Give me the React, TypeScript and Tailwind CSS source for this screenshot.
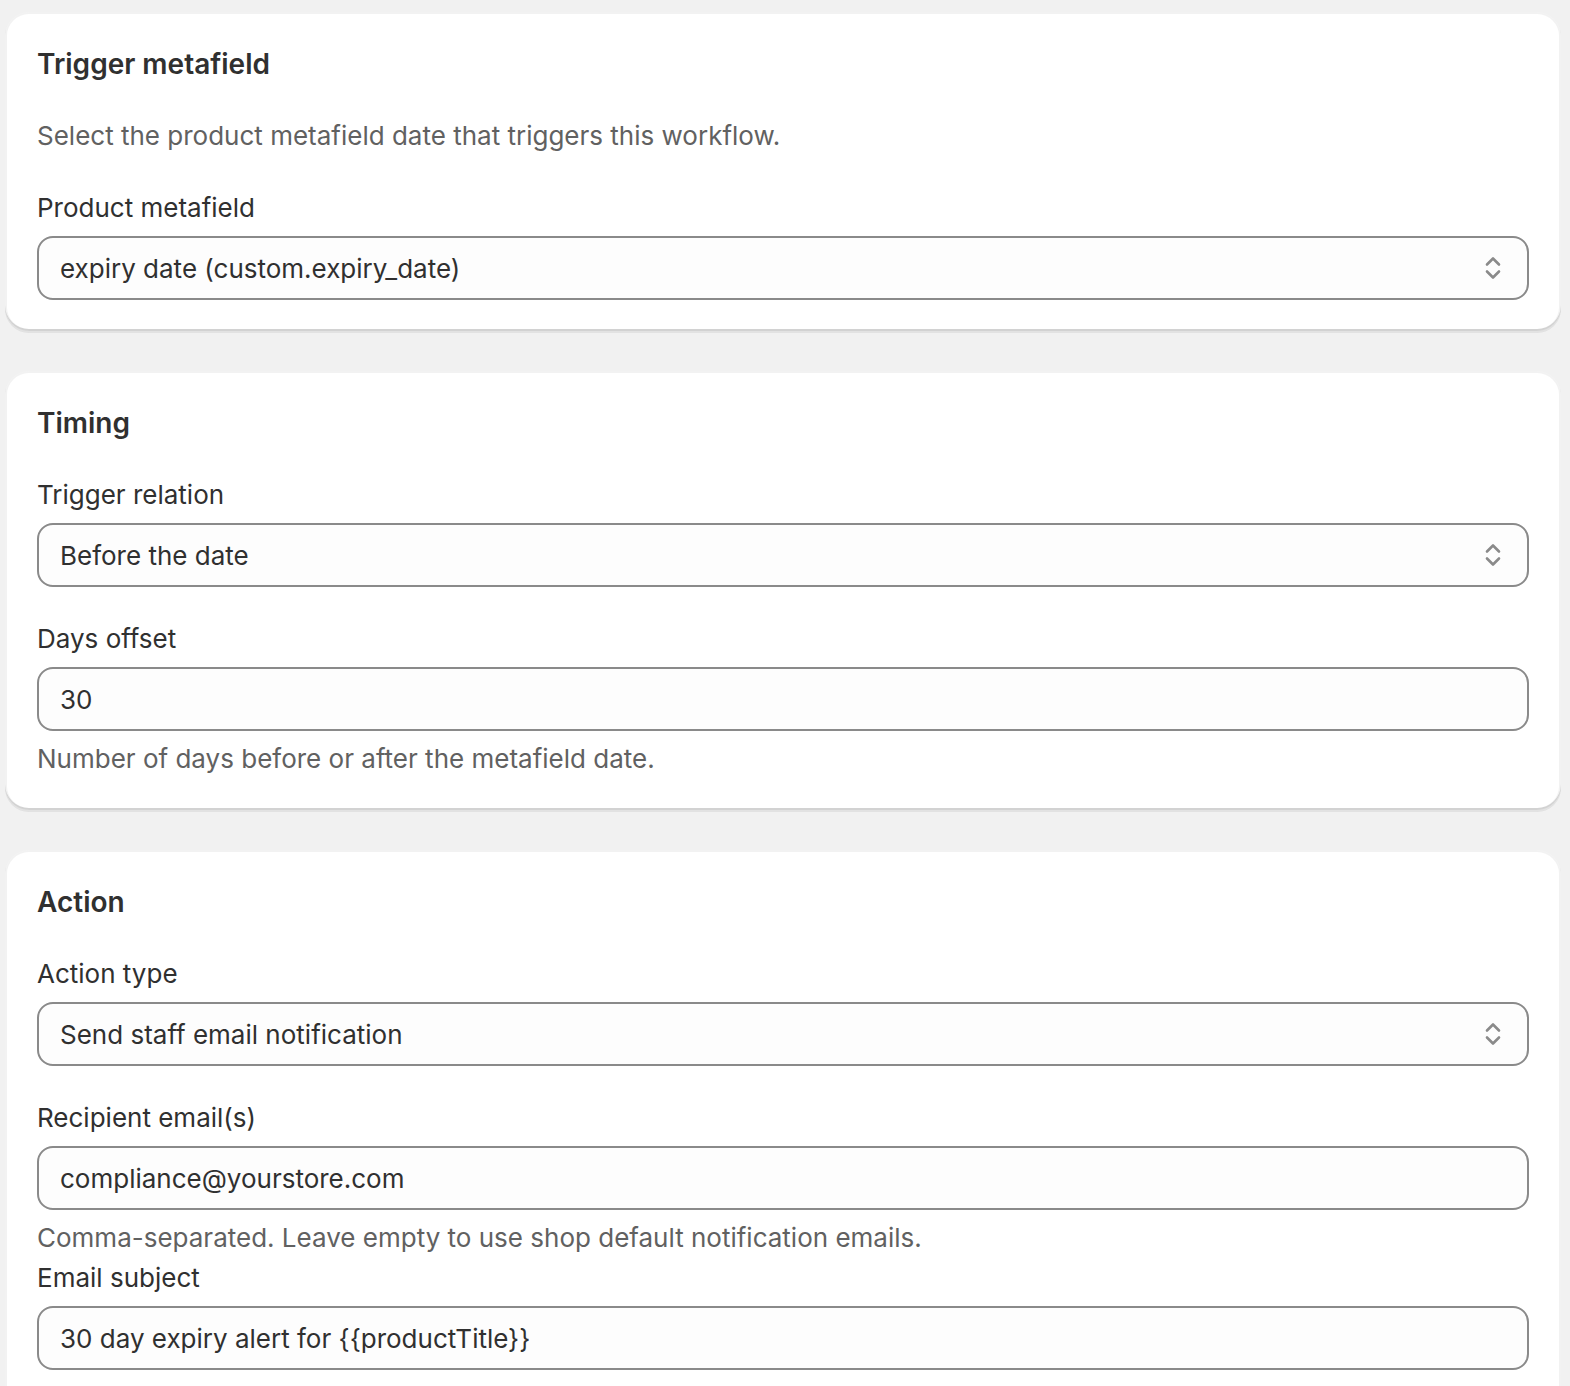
import type { ReactNode } from "react";

const FONT = { fontFamily: "Inter, 'Noto Sans', sans-serif" };

function Card({ title, children }: { title: string; children: ReactNode }) {
  return (
    <section className="rounded-[24px] bg-white px-8 pt-8 pb-[31px] shadow-[0_2px_0_rgba(26,26,26,0.07),inset_0_-2px_0_rgba(0,0,0,0.13),inset_0_0_0_2px_rgba(0,0,0,0.05)]">
      <h2 className="text-[28px] leading-10 font-semibold text-[#303030]">{title}</h2>
      <div className="mt-8 flex flex-col">{children}</div>
    </section>
  );
}

function SelectChevrons() {
  return (
    <svg width="20" height="28" viewBox="0 0 20 28" fill="none" stroke="#8a8a8a" strokeWidth="2.6" strokeLinecap="round" strokeLinejoin="round">
      <path d="M4 10.5 10 4.5 16 10.5" />
      <path d="M4 17.5 10 23.5 16 17.5" />
    </svg>
  );
}

function Field({ label, value, select, help }: { label: string; value: string; select?: boolean; help?: string }) {
  return (
    <div className="flex flex-col">
      <label className="text-[26px] leading-10 text-[#303030]">{label}</label>
      <div className="mt-2 flex h-16 items-center justify-between rounded-[16px] border-2 border-[#8a8a8a] bg-[#fdfdfd] pr-6 pl-[21px]">
        <span className="text-[26px] text-[#303030]">{value}</span>
        {select ? <SelectChevrons /> : null}
      </div>
      {help ? <p className="mt-2 text-[26px] leading-10 text-[#616161]">{help}</p> : null}
    </div>
  );
}

export default function App() {
  return (
    <div style={FONT} className="min-h-screen bg-[#f1f1f1] pt-[12px] pr-[9px] pl-[5px]">
      <div className="flex flex-col gap-[40px]">
        <Card title="Trigger metafield">
          <p className="text-[26px] leading-10 text-[#616161]">Select the product metafield date that triggers this workflow.</p>
          <div className="mt-8">
            <Field label="Product metafield" value="expiry date (custom.expiry_date)" select />
          </div>
        </Card>

        <Card title="Timing">
          <Field label="Trigger relation" value="Before the date" select />
          <div className="mt-8">
            <Field label="Days offset" value="30" help="Number of days before or after the metafield date." />
          </div>
        </Card>

        <Card title="Action">
          <Field label="Action type" value="Send staff email notification" select />
          <div className="mt-8">
            <Field
              label="Recipient email(s)"
              value="compliance@yourstore.com"
              help="Comma-separated. Leave empty to use shop default notification emails."
            />
          </div>
          <Field label="Email subject" value="30 day expiry alert for {{productTitle}}" />
          <div className="h-24" />
        </Card>
      </div>
    </div>
  );
}
